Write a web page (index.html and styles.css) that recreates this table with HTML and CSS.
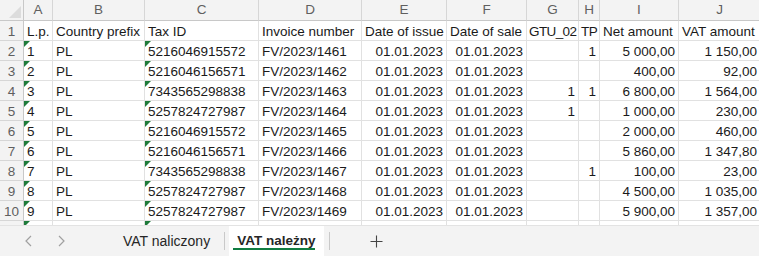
FILE: index.html
```html
<!DOCTYPE html>
<html lang="pl">
<head>
<meta charset="utf-8">
<title>VAT należny</title>
<link rel="stylesheet" href="styles.css">
</head>
<body>
<div class="app">
  <div class="sheet">
    <div class="grid">
      <div class="corner"><span class="corner-tri"></span></div>
      <div class="ch">A</div><div class="ch">B</div><div class="ch">C</div><div class="ch">D</div><div class="ch">E</div><div class="ch">F</div><div class="ch">G</div><div class="ch">H</div><div class="ch">I</div><div class="ch last">J</div>

      <div class="rh">1</div><div class="c">L.p.</div><div class="c">Country prefix</div><div class="c">Tax ID</div><div class="c">Invoice number</div><div class="c">Date of issue</div><div class="c">Date of sale</div><div class="c tight">GTU_02</div><div class="c tight">TP</div><div class="c">Net amount</div><div class="c last">VAT amount</div>

      <div class="rh">2</div><div class="c tri">1</div><div class="c">PL</div><div class="c tri">5216046915572</div><div class="c">FV/2023/1461</div><div class="c r">01.01.2023</div><div class="c r">01.01.2023</div><div class="c r"></div><div class="c r">1</div><div class="c r">5 000,00</div><div class="c r last">1 150,00</div>

      <div class="rh">3</div><div class="c tri">2</div><div class="c">PL</div><div class="c tri">5216046156571</div><div class="c">FV/2023/1462</div><div class="c r">01.01.2023</div><div class="c r">01.01.2023</div><div class="c r"></div><div class="c r"></div><div class="c r">400,00</div><div class="c r last">92,00</div>

      <div class="rh">4</div><div class="c tri">3</div><div class="c">PL</div><div class="c tri">7343565298838</div><div class="c">FV/2023/1463</div><div class="c r">01.01.2023</div><div class="c r">01.01.2023</div><div class="c r">1</div><div class="c r">1</div><div class="c r">6 800,00</div><div class="c r last">1 564,00</div>

      <div class="rh">5</div><div class="c tri">4</div><div class="c">PL</div><div class="c tri">5257824727987</div><div class="c">FV/2023/1464</div><div class="c r">01.01.2023</div><div class="c r">01.01.2023</div><div class="c r">1</div><div class="c r"></div><div class="c r">1 000,00</div><div class="c r last">230,00</div>

      <div class="rh">6</div><div class="c tri">5</div><div class="c">PL</div><div class="c tri">5216046915572</div><div class="c">FV/2023/1465</div><div class="c r">01.01.2023</div><div class="c r">01.01.2023</div><div class="c r"></div><div class="c r"></div><div class="c r">2 000,00</div><div class="c r last">460,00</div>

      <div class="rh">7</div><div class="c tri">6</div><div class="c">PL</div><div class="c tri">5216046156571</div><div class="c">FV/2023/1466</div><div class="c r">01.01.2023</div><div class="c r">01.01.2023</div><div class="c r"></div><div class="c r"></div><div class="c r">5 860,00</div><div class="c r last">1 347,80</div>

      <div class="rh">8</div><div class="c tri">7</div><div class="c">PL</div><div class="c tri">7343565298838</div><div class="c">FV/2023/1467</div><div class="c r">01.01.2023</div><div class="c r">01.01.2023</div><div class="c r"></div><div class="c r">1</div><div class="c r">100,00</div><div class="c r last">23,00</div>

      <div class="rh">9</div><div class="c tri">8</div><div class="c">PL</div><div class="c tri">5257824727987</div><div class="c">FV/2023/1468</div><div class="c r">01.01.2023</div><div class="c r">01.01.2023</div><div class="c r"></div><div class="c r"></div><div class="c r">4 500,00</div><div class="c r last">1 035,00</div>

      <div class="rh">10</div><div class="c tri">9</div><div class="c">PL</div><div class="c tri">5257824727987</div><div class="c">FV/2023/1469</div><div class="c r">01.01.2023</div><div class="c r">01.01.2023</div><div class="c r"></div><div class="c r"></div><div class="c r">5 900,00</div><div class="c r last">1 357,00</div>

      <div class="rh">11</div><div class="c tri">10</div><div class="c">PL</div><div class="c tri">5216046915572</div><div class="c">FV/2023/1470</div><div class="c r">01.01.2023</div><div class="c r">01.01.2023</div><div class="c r"></div><div class="c r"></div><div class="c r">3 000,00</div><div class="c r last">690,00</div>
    </div>
  </div>
  <div class="tabbar">
    <div class="nav">
      <svg width="10" height="12" viewBox="0 0 10 12"><path d="M7 1 L2 6 L7 11" fill="none" stroke="#a0a0a0" stroke-width="1.2"/></svg>
    </div>
    <div class="nav">
      <svg width="10" height="12" viewBox="0 0 10 12"><path d="M3 1 L8 6 L3 11" fill="none" stroke="#a0a0a0" stroke-width="1.2"/></svg>
    </div>
    <div class="tab">VAT naliczony</div>
    <div class="sep"></div>
    <div class="tab active"><span class="tab-label">VAT należny</span></div>
    <div class="sep"></div>
    <div class="add">
      <svg width="13" height="13" viewBox="0 0 13 13"><path d="M6.5 0.5 V12.5 M0.5 6.5 H12.5" stroke="#444" stroke-width="1.1"/></svg>
    </div>
  </div>
</div>
</body>
</html>
```
FILE: styles.css
```css
html, body {
  margin: 0;
  padding: 0;
  background: #ffffff;
}
body {
  font-family: "Liberation Sans", Arial, sans-serif;
  color: #1a1a1a;
}
.app {
  width: 759px;
  height: 256px;
  display: flex;
  flex-direction: column;
  overflow: hidden;
}
.sheet {
  flex: 1;
  overflow: hidden;
  background: #fff;
}
.grid {
  display: grid;
  grid-template-columns: 24px 29px 92px 114px 103px 85px 80px 52px 21px 79px 81px;
  grid-template-rows: 21px;
  grid-auto-rows: 20px;
}
.corner {
  background: #f3f3f3;
  border-right: 1px solid #c8c8c8;
  border-bottom: 1px solid #c8c8c8;
  position: relative;
  overflow: hidden;
}
.corner-tri {
  position: absolute;
  right: 2px;
  bottom: 2px;
  width: 0;
  height: 0;
  border-left: 12px solid transparent;
  border-bottom: 12px solid #dcdcdc;
}
.ch {
  background: #f3f3f3;
  color: #5f5f5f;
  font-size: 13.5px;
  text-align: center;
  line-height: 20px;
  border-right: 1px solid #d6d6d6;
  border-bottom: 1px solid #c8c8c8;
}
.rh {
  background: #f3f3f3;
  color: #5f5f5f;
  font-size: 13.5px;
  text-align: center;
  line-height: 20px;
  padding-top: 1px;
  border-right: 1px solid #c8c8c8;
  border-bottom: 1px solid #d6d6d6;
  box-sizing: border-box;
}
.c {
  position: relative;
  font-size: 13.5px;
  line-height: 19px;
  padding: 1px 3px 0 3px;
  white-space: nowrap;
  overflow: hidden;
  border-right: 1px solid #e1e1e1;
  border-bottom: 1px solid #e1e1e1;
  box-sizing: border-box;
}
.c.tight {
  padding-left: 2px;
  padding-right: 1px;
  letter-spacing: -0.6px;
}
.c.last, .ch.last {
  border-right: none;
}
.c.r {
  text-align: right;
}
.tri::before {
  content: "";
  position: absolute;
  top: 0;
  left: 0;
  width: 0;
  height: 0;
  border-top: 6px solid #1e7b3a;
  border-right: 6px solid transparent;
}
.tabbar {
  height: 31px;
  flex: none;
  background: #f3f3f3;
  border-top: 1px solid #e3e3e3;
  box-sizing: border-box;
  display: flex;
  align-items: stretch;
  font-size: 14px;
  color: #262626;
}
.nav {
  width: 32px;
  display: flex;
  align-items: center;
  justify-content: center;
}
.nav:first-child {
  margin-left: 13px;
}
.tab {
  display: flex;
  align-items: center;
  padding: 0 14px 0 0;
}
.tab:nth-child(3) {
  margin-left: 46px;
}
.tab.active {
  background: #ffffff;
  margin: 0 5px 0 4px;
  padding: 0 9px 0 8px;
  font-size: 13.5px;
  font-weight: bold;
  position: relative;
}
.tab-label {
  display: inline-block;
  padding-bottom: 2px;
}
.tab.active::after {
  content: "";
  position: absolute;
  left: 4px;
  right: 9px;
  bottom: 6px;
  height: 2px;
  background: #107c41;
}
.sep {
  width: 1px;
  background: #c9c9c9;
  margin: 6px 0 6px 0;
}
.add {
  display: flex;
  align-items: center;
  margin-left: 40px;
}
```
